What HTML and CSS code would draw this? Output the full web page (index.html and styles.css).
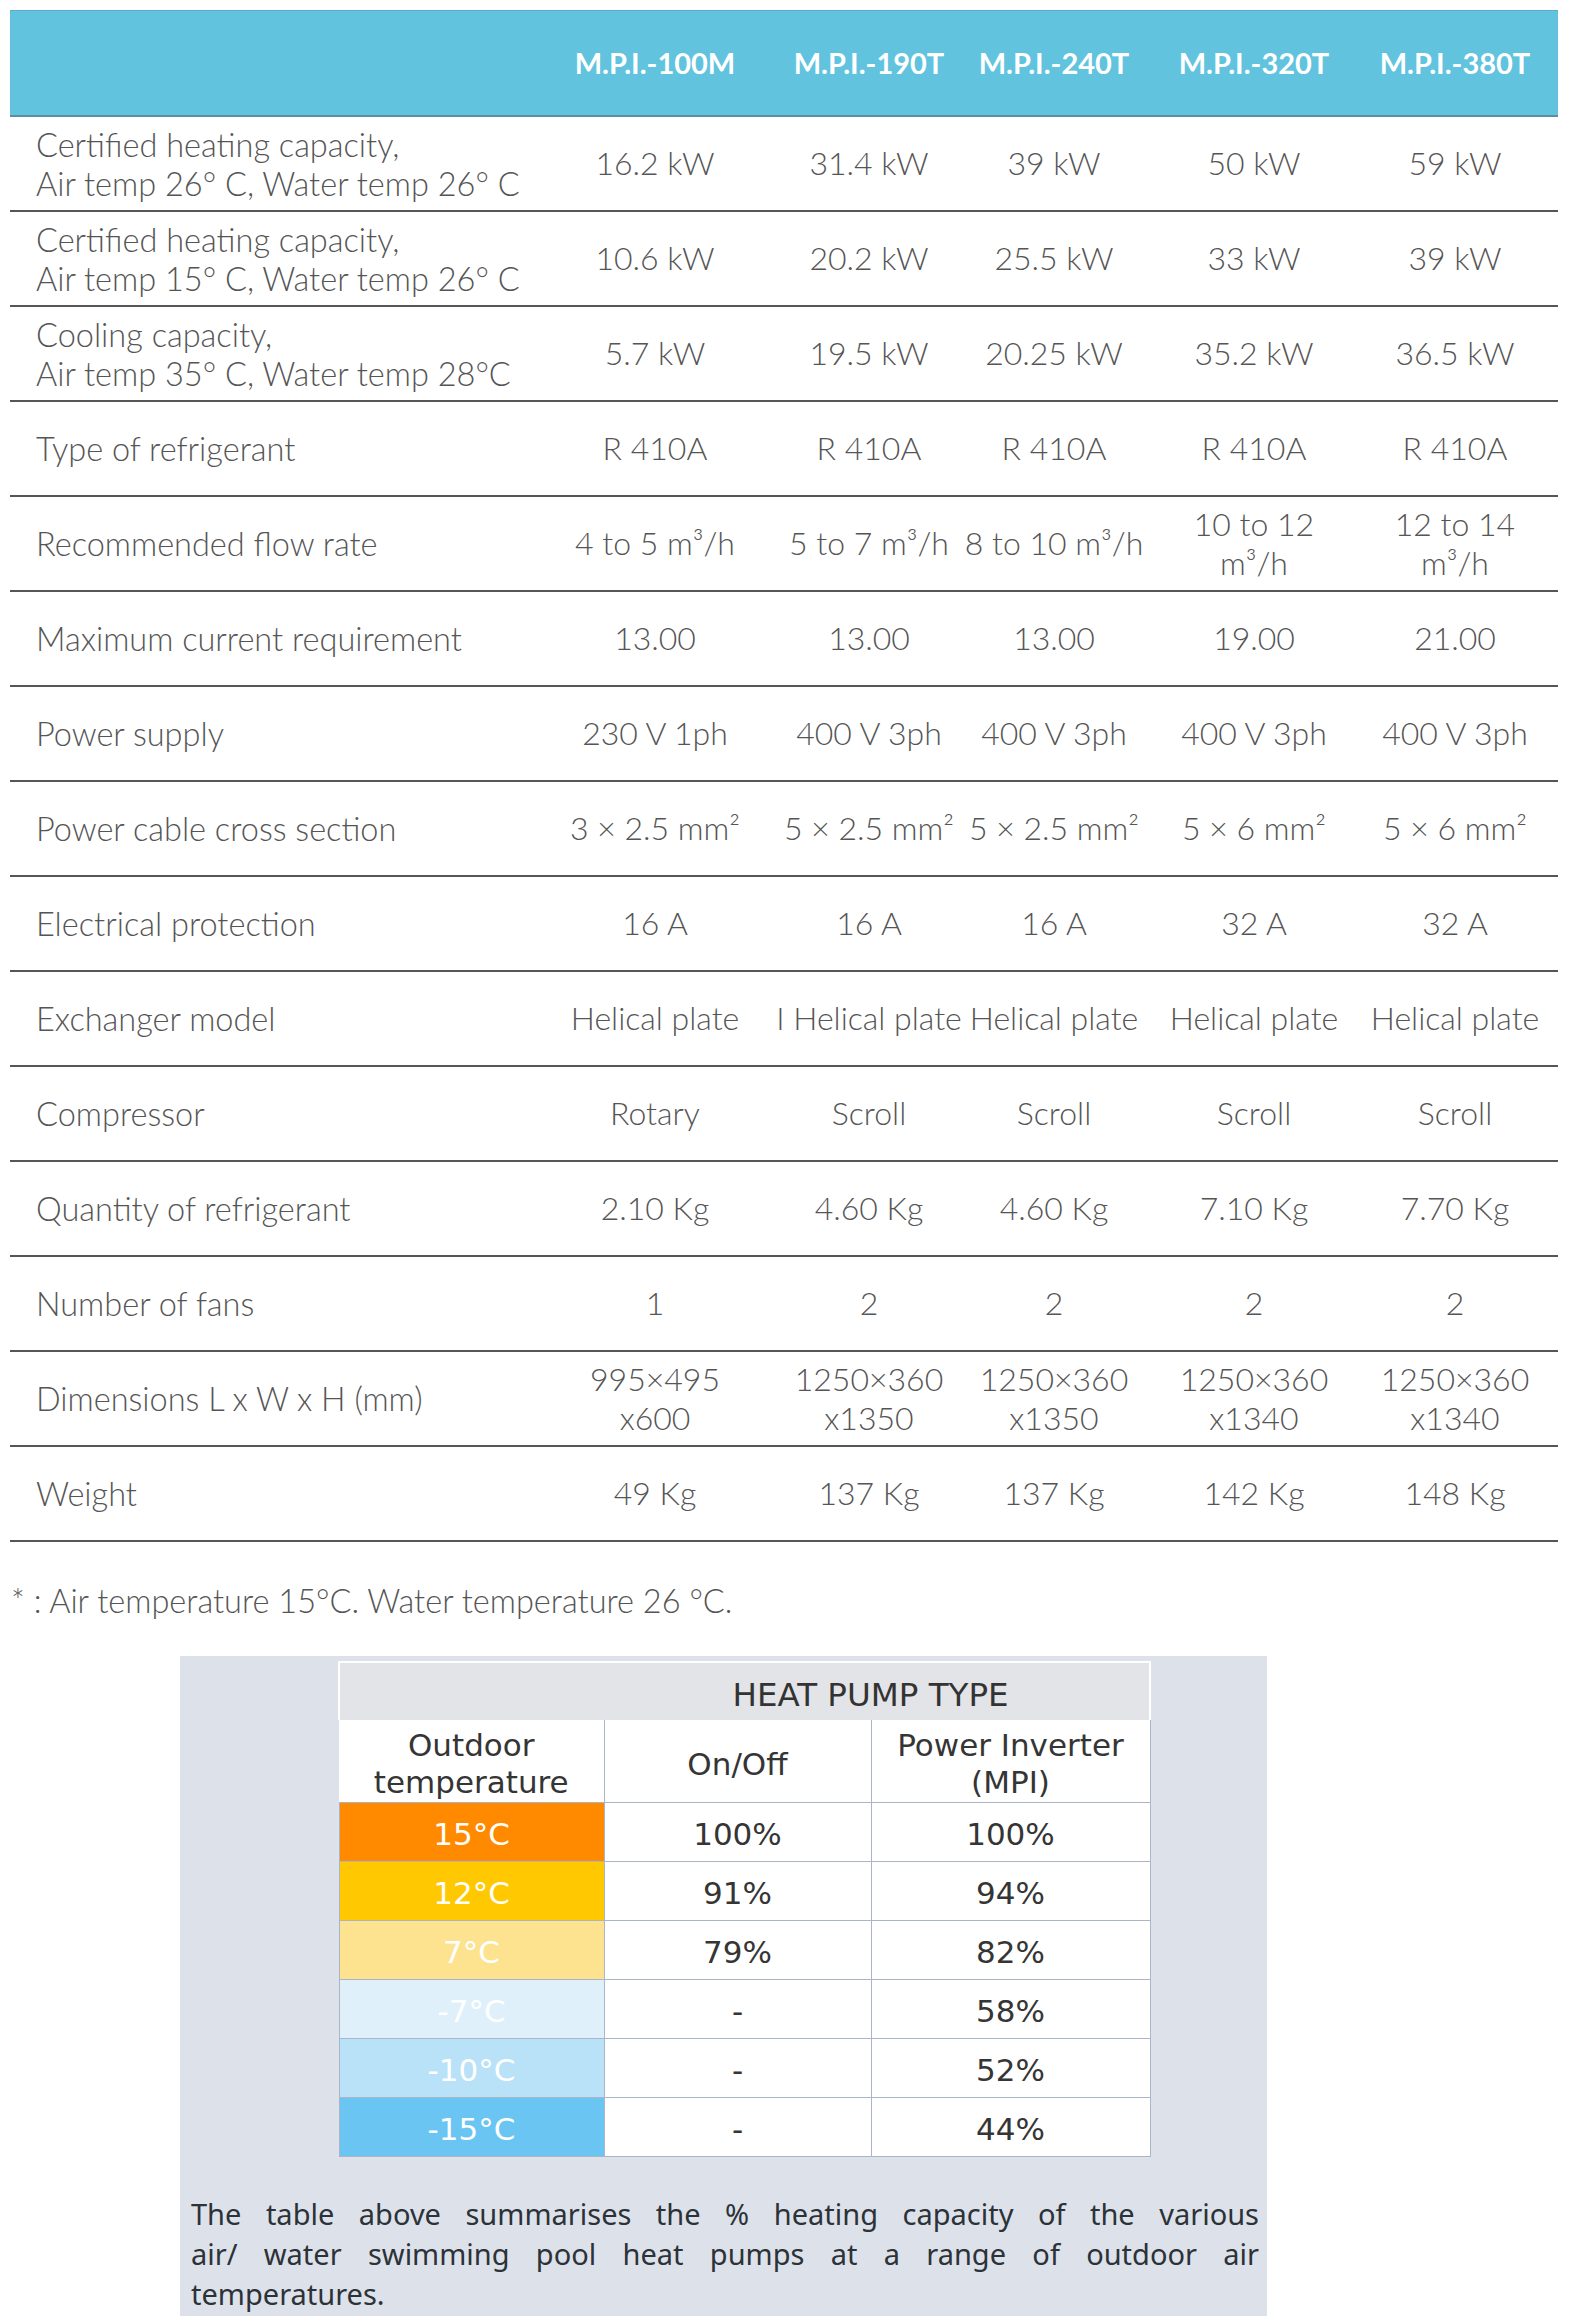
FILE: index.html
```html
<!DOCTYPE html>
<html lang="en">
<head>
<meta charset="utf-8">
<title>M.P.I. heat pump specifications</title>
<link rel="stylesheet" href="styles.css">
</head>
<body>
<div class="spec">
  <div class="row head">
    <div class="cell label"></div>
    <div class="cell">M.P.I.-100M</div>
    <div class="cell">M.P.I.-190T</div>
    <div class="cell">M.P.I.-240T</div>
    <div class="cell">M.P.I.-320T</div>
    <div class="cell">M.P.I.-380T</div>
  </div>
  <div class="row">
    <div class="cell label">Certified heating capacity,<br>Air temp 26° C, Water temp 26° C</div>
    <div class="cell">16.2 kW</div>
    <div class="cell">31.4 kW</div>
    <div class="cell">39 kW</div>
    <div class="cell">50 kW</div>
    <div class="cell">59 kW</div>
  </div>
  <div class="row">
    <div class="cell label">Certified heating capacity,<br>Air temp 15° C, Water temp 26° C</div>
    <div class="cell">10.6 kW</div>
    <div class="cell">20.2 kW</div>
    <div class="cell">25.5 kW</div>
    <div class="cell">33 kW</div>
    <div class="cell">39 kW</div>
  </div>
  <div class="row">
    <div class="cell label">Cooling capacity,<br>Air temp 35° C, Water temp 28°C</div>
    <div class="cell">5.7 kW</div>
    <div class="cell">19.5 kW</div>
    <div class="cell">20.25 kW</div>
    <div class="cell">35.2 kW</div>
    <div class="cell">36.5 kW</div>
  </div>
  <div class="row">
    <div class="cell label">Type of refrigerant</div>
    <div class="cell">R 410A</div>
    <div class="cell">R 410A</div>
    <div class="cell">R 410A</div>
    <div class="cell">R 410A</div>
    <div class="cell">R 410A</div>
  </div>
  <div class="row">
    <div class="cell label">Recommended flow rate</div>
    <div class="cell">4 to 5 m³/h</div>
    <div class="cell">5 to 7 m³/h</div>
    <div class="cell">8 to 10 m³/h</div>
    <div class="cell">10 to 12<br>m³/h</div>
    <div class="cell">12 to 14<br>m³/h</div>
  </div>
  <div class="row">
    <div class="cell label">Maximum current requirement</div>
    <div class="cell">13.00</div>
    <div class="cell">13.00</div>
    <div class="cell">13.00</div>
    <div class="cell">19.00</div>
    <div class="cell">21.00</div>
  </div>
  <div class="row">
    <div class="cell label">Power supply</div>
    <div class="cell">230 V 1ph</div>
    <div class="cell">400 V 3ph</div>
    <div class="cell">400 V 3ph</div>
    <div class="cell">400 V 3ph</div>
    <div class="cell">400 V 3ph</div>
  </div>
  <div class="row">
    <div class="cell label">Power cable cross section</div>
    <div class="cell">3 × 2.5 mm²</div>
    <div class="cell">5 × 2.5 mm²</div>
    <div class="cell">5 × 2.5 mm²</div>
    <div class="cell">5 × 6 mm²</div>
    <div class="cell">5 × 6 mm²</div>
  </div>
  <div class="row">
    <div class="cell label">Electrical protection</div>
    <div class="cell">16 A</div>
    <div class="cell">16 A</div>
    <div class="cell">16 A</div>
    <div class="cell">32 A</div>
    <div class="cell">32 A</div>
  </div>
  <div class="row">
    <div class="cell label">Exchanger model</div>
    <div class="cell">Helical plate</div>
    <div class="cell">I Helical plate</div>
    <div class="cell">Helical plate</div>
    <div class="cell">Helical plate</div>
    <div class="cell">Helical plate</div>
  </div>
  <div class="row">
    <div class="cell label">Compressor</div>
    <div class="cell">Rotary</div>
    <div class="cell">Scroll</div>
    <div class="cell">Scroll</div>
    <div class="cell">Scroll</div>
    <div class="cell">Scroll</div>
  </div>
  <div class="row">
    <div class="cell label">Quantity of refrigerant</div>
    <div class="cell">2.10 Kg</div>
    <div class="cell">4.60 Kg</div>
    <div class="cell">4.60 Kg</div>
    <div class="cell">7.10 Kg</div>
    <div class="cell">7.70 Kg</div>
  </div>
  <div class="row">
    <div class="cell label">Number of fans</div>
    <div class="cell">1</div>
    <div class="cell">2</div>
    <div class="cell">2</div>
    <div class="cell">2</div>
    <div class="cell">2</div>
  </div>
  <div class="row">
    <div class="cell label">Dimensions L x W x H (mm)</div>
    <div class="cell">995×495<br>x600</div>
    <div class="cell">1250×360<br>x1350</div>
    <div class="cell">1250×360<br>x1350</div>
    <div class="cell">1250×360<br>x1340</div>
    <div class="cell">1250×360<br>x1340</div>
  </div>
  <div class="row">
    <div class="cell label">Weight</div>
    <div class="cell">49 Kg</div>
    <div class="cell">137 Kg</div>
    <div class="cell">137 Kg</div>
    <div class="cell">142 Kg</div>
    <div class="cell">148 Kg</div>
  </div>
</div>

<p class="note">* : Air temperature 15°C. Water temperature 26 °C.</p>

<section class="panel">
  <table class="hp">
    <colgroup>
      <col class="c1"><col class="c2"><col class="c3">
    </colgroup>
    <tr class="hp-title">
      <td></td>
      <td colspan="2">HEAT PUMP TYPE</td>
    </tr>
    <tr class="hp-head">
      <td>Outdoor<br>temperature</td>
      <td>On/Off</td>
      <td>Power Inverter<br>(MPI)</td>
    </tr>
    <tr><td class="t t15">15°C</td><td>100%</td><td>100%</td></tr>
    <tr><td class="t t12">12°C</td><td>91%</td><td>94%</td></tr>
    <tr><td class="t t7">7°C</td><td>79%</td><td>82%</td></tr>
    <tr><td class="t tm7">-7°C</td><td>-</td><td>58%</td></tr>
    <tr><td class="t tm10">-10°C</td><td>-</td><td>52%</td></tr>
    <tr><td class="t tm15">-15°C</td><td>-</td><td>44%</td></tr>
  </table>
  <p class="summary">The table above summarises the % heating capacity of the various<br>air/ water swimming pool heat pumps at a range of outdoor air<br>temperatures.</p>
</section>
</body>
</html>
```

FILE: styles.css
```css
html, body {
  margin: 0;
  background: #ffffff;
}

body {
  padding: 10px 14px 0 10px;
  font-family: "Lato", "Liberation Sans", sans-serif;
  color: #555555;
  overflow: hidden;
  height: 2306px;
}

.spec {
  width: 1548px;
}

.row {
  display: grid;
  grid-template-columns: 514px 262px 166px 204px 196px 206px;
  height: 93px;
  border-bottom: 2px solid #565656;
  font-size: 32px;
  font-weight: 300;
  line-height: 38.5px;
}

.row.head {
  background: #62c3df;
  border-top: 1px solid #58aec8;
  border-bottom: 2px solid #5f8f9f;
  color: #ffffff;
  font-weight: 700;
  font-size: 29px;
  box-sizing: border-box;
  height: 107px;
}

.cell {
  display: flex;
  align-items: center;
  justify-content: center;
  text-align: center;
  white-space: nowrap;
}

.cell.label {
  justify-content: flex-start;
  text-align: left;
  padding-left: 26px;
  font-size: 32.5px;
  line-height: 39px;
}

.note {
  margin: 39px 0 0 1px;
  font-size: 32.5px;
  font-weight: 300;
  line-height: 40px;
  color: #555555;
}

.panel {
  margin: 35px 0 0 170px;
  width: 1087px;
  height: 700px;
  box-sizing: border-box;
  padding: 5px 8px 0 11px;
  background: #dde2ea;
}

.hp {
  margin-left: 147px;
  width: 811px;
  table-layout: fixed;
  border-collapse: collapse;
  font-family: "DejaVu Sans", "Noto Sans", sans-serif;
  font-size: 31px;
  color: #353535;
  text-align: center;
}

.hp col.c1 { width: 265px; }
.hp col.c2 { width: 267px; }
.hp col.c3 { width: 279px; }

.hp td {
  padding: 6px 0 0 0;
  height: 59px;
  box-sizing: border-box;
  background: #ffffff;
  border: 1px solid #aab5c5;
  line-height: 37px;
}

.hp .hp-title td {
  height: 58px;
  padding-top: 7px;
  background: #e3e4e7;
  border: none;
  border-top: 2px solid #ffffff;
  font-size: 32.5px;
  color: #333333;
}

.hp .hp-title td:last-child {
  padding-right: 12px;
}

.hp .hp-title td:first-child {
  border-left: 2px solid #ffffff;
}

.hp .hp-title td:last-child {
  border-right: 2px solid #ffffff;
}

.hp .hp-head td {
  height: 82px;
  padding-top: 7px;
  line-height: 37px;
  border-top: none;
  vertical-align: middle;
}

.hp .hp-head td:first-child {
  border-left: none;
}

.hp td.t {
  color: #ffffff;
}

.t15 { background: #ff8a00 !important; }
.t12 { background: #ffc800 !important; }
.t7 { background: #fde38f !important; }
.tm7 { background: #dff0fb !important; }
.tm10 { background: #b9e2f8 !important; }
.tm15 { background: #6ac5f2 !important; }

.summary {
  margin: 37px 0 0 0;
  font-family: "Noto Sans", "Lato", sans-serif;
  font-size: 29px;
  line-height: 40px;
  color: #2c3238;
  text-align: justify;
  text-align-last: justify;
}
```
